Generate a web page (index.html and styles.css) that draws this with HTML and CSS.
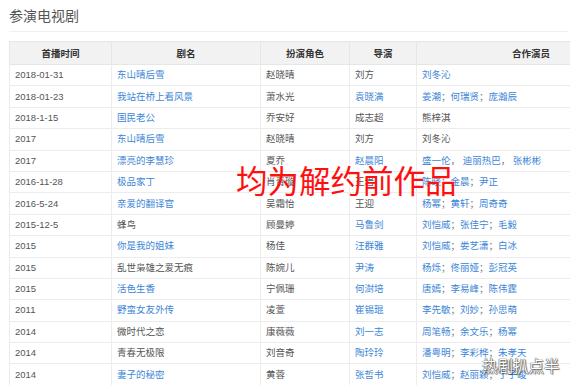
FILE: index.html
```html
<!DOCTYPE html>
<html lang="zh-CN">
<head>
<meta charset="utf-8">
<title>参演电视剧</title>
<link rel="stylesheet" href="styles.css">
</head>
<body>
<div class="page">
  <h2 class="title">参演电视剧</h2>
  <table class="works">
    <colgroup>
      <col class="c1"><col class="c2"><col class="c3"><col class="c4"><col class="c5">
    </colgroup>
    <thead>
      <tr><th>首播时间</th><th>剧名</th><th>扮演角色</th><th>导演</th><th>合作演员</th></tr>
    </thead>
    <tbody>
      <tr><td>2018-01-31</td><td><a>东山晴后雪</a></td><td>赵晓晴</td><td>刘方</td><td><a>刘冬沁</a></td></tr>
      <tr><td>2018-01-23</td><td><a>我站在桥上看风景</a></td><td>萧水光</td><td><a>袁晓满</a></td><td><a>姜潮</a><span class="sep">；</span><a>何瑞贤</a><span class="sep">；</span><a>庞瀚辰</a></td></tr>
      <tr><td>2018-1-15</td><td><a>国民老公</a></td><td>乔安好</td><td>成志超</td><td>熊梓淇</td></tr>
      <tr><td>2017</td><td><a>东山晴后雪</a></td><td>赵晓晴</td><td>刘方</td><td>刘冬沁</td></tr>
      <tr><td>2017</td><td><a>漂亮的李慧珍</a></td><td>夏乔</td><td><a>赵晨阳</a></td><td><a>盛一伦</a><span class="sep">， </span><a>迪丽热巴</a><span class="sep">， </span><a>张彬彬</a></td></tr>
      <tr><td>2016-11-28</td><td><a>极品家丁</a></td><td>肖青璇</td><td>王岩</td><td><a>陈晓</a><span class="sep">；</span><a>金晨</a><span class="sep">；</span><a>尹正</a></td></tr>
      <tr><td>2016-5-24</td><td><a>亲爱的翻译官</a></td><td>吴霜怡</td><td>王迎</td><td><a>杨幂</a><span class="sep">；</span><a>黄轩</a><span class="sep">；</span><a>周奇奇</a></td></tr>
      <tr><td>2015-12-5</td><td>蜂鸟</td><td>顾曼婷</td><td><a>马鲁剑</a></td><td><a>刘恺威</a><span class="sep">；</span><a>张佳宁</a><span class="sep">；</span><a>毛毅</a></td></tr>
      <tr><td>2015</td><td><a>你是我的姐妹</a></td><td>杨佳</td><td><a>汪群雅</a></td><td><a>刘恺威</a><span class="sep">；</span><a>娄艺潇</a><span class="sep">；</span><a>白冰</a></td></tr>
      <tr><td>2015</td><td>乱世枭雄之爱无痕</td><td>陈婉儿</td><td><a>尹涛</a></td><td><a>杨烁</a><span class="sep">；</span><a>佟丽娅</a><span class="sep">；</span><a>彭冠英</a></td></tr>
      <tr><td>2015</td><td><a>活色生香</a></td><td>宁佩珊</td><td><a>何澍培</a></td><td><a>唐嫣</a><span class="sep">；</span><a>李易峰</a><span class="sep">；</span><a>陈伟霆</a></td></tr>
      <tr><td>2011</td><td><a>野蛮女友外传</a></td><td>凌萱</td><td><a>崔锡琨</a></td><td><a>李先敏</a><span class="sep">；</span><a>刘妙</a><span class="sep">；</span><a>孙思萌</a></td></tr>
      <tr><td>2014</td><td>微时代之恋</td><td>康薇薇</td><td><a>刘一志</a></td><td><a>周笔畅</a><span class="sep">；</span><a>余文乐</a><span class="sep">；</span><a>杨幂</a></td></tr>
      <tr><td>2014</td><td>青春无极限</td><td>刘音奇</td><td><a>陶玲玲</a></td><td><a>潘粤明</a><span class="sep">；</span><a>李彩桦</a><span class="sep">；</span><a>朱孝天</a></td></tr>
      <tr><td>2014</td><td><a>妻子的秘密</a></td><td>黄蓉</td><td><a>张哲书</a></td><td><a>刘恺威</a><span class="sep">；</span><a>赵丽颖</a><span class="sep">；</span><a>丁子峻</a></td></tr>
    </tbody>
  </table>
  <div class="overlay">均为解约前作品</div>
  <div class="watermark">热剧扒点半</div>
</div>
</body>
</html>
```
FILE: styles.css
```css
html, body {
  margin: 0;
  padding: 0;
  background: #fff;
  overflow: hidden;
}
body {
  width: 570px;
  height: 385px;
  font-family: "Liberation Sans", "Noto Sans CJK SC", sans-serif;
  color: #555;
}
.page {
  position: relative;
  width: 570px;
  height: 385px;
  overflow: hidden;
  padding-left: 9px;
  box-sizing: border-box;
}
.title {
  margin: 0;
  padding-top: 6px;
  height: 25px;
  font-size: 14px;
  font-weight: normal;
  line-height: 18px;
  color: #555;
  font-family: "Noto Sans CJK SC", sans-serif;
  border-bottom: 1px solid #f0f0f0;
  width: 559px;
}
.works {
  margin-top: 9px;
  border-collapse: collapse;
  table-layout: fixed;
  width: 636px;
  font-size: 9.5px;
}
.c1 { width: 102px; }
.c2 { width: 149px; }
.c3 { width: 89px; }
.c4 { width: 67px; }
.c5 { width: 229px; }
.works th {
  background: #f2f2f2;
  color: #333;
  font-weight: bold;
  height: 22px;
  padding: 0;
  text-align: center;
  border: 1px solid #e6e6e6;
  font-family: "Noto Sans CJK SC", sans-serif;
}
.works td {
  height: 20.4px;
  padding: 0 0 0 5px;
  border: 1px solid #ececec;
  white-space: nowrap;
  overflow: hidden;
  color: #555;
  line-height: 12px;
}
.works a {
  color: #3d86d6;
  text-decoration: none;
}
.sep {
  color: #777;
}
.overlay {
  position: absolute;
  left: 236px;
  top: 161px;
  font-size: 31.5px;
  line-height: 36px;
  color: #ff1010;
  font-family: "Noto Sans CJK SC", sans-serif;
  letter-spacing: 0;
  white-space: nowrap;
}
.watermark {
  position: absolute;
  left: 482px;
  top: 355px;
  font-size: 15.5px;
  line-height: 20px;
  color: #fff;
  font-family: "Noto Sans CJK SC", sans-serif;
  text-shadow: 0 0 1px #333, 0 0 1px #333, 1px 1px 1px rgba(0,0,0,0.5);
  white-space: nowrap;
}
```
